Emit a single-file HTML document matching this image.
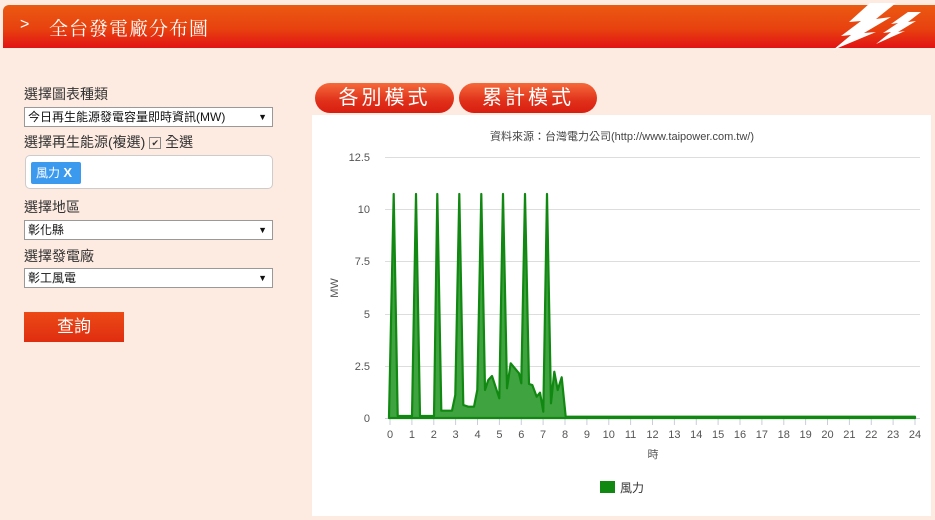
<!DOCTYPE html>
<html><head><meta charset="utf-8"><style>
body{margin:0;width:935px;height:520px;background:#fdeae1;font-family:"Liberation Sans","Noto Sans CJK TC",sans-serif;position:relative;overflow:hidden}
.hdr{position:absolute;left:3px;top:5px;width:932px;height:43px;background:linear-gradient(#ea5a12,#e8420f 55%,#e11313);border-radius:6px 0 0 0}
.hdr .t{position:absolute;left:46px;top:9px;color:#fff;font-family:"Noto Serif CJK SC",serif;font-size:19px;letter-spacing:1px}
.hdr .a{position:absolute;left:17px;top:11px;color:#fff;font-size:16px}
.lbl{position:absolute;left:24px;font-size:14px;color:#333}
.sel{position:absolute;left:24px;background:#fff;border:1px solid #999;font-size:12px;line-height:18px;padding-left:3px;box-sizing:border-box;width:249px;height:20px;color:#111}
.sel:after{content:"▼";position:absolute;right:5px;top:0;font-size:9px}
.btn{position:absolute;top:83px;height:30px;border-radius:15px;background:linear-gradient(#f56a3a,#e0301a 60%,#d91e10);color:#fff;font-size:20px;letter-spacing:3px;text-align:center;line-height:30px}
</style></head><body>
<div class="hdr"><span class="a">&gt;</span><span class="t">全台發電廠分布圖</span>
<svg style="position:absolute;left:0;top:-5px" width="932" height="50"><polygon points="867,3 893,3 873,19 888,17 861,33 873,32 830,50 848,35 838,36 858,21 846,22" fill="#fff"/><polygon points="905,12 918,12 905,22 913,21 895,32 902,31 873,44 888,32 880,33 895,23 888,24" fill="#fff"/></svg></div>
<div class="lbl" style="top:84px">選擇圖表種類</div>
<div class="sel" style="top:107px">今日再生能源發電容量即時資訊(MW)</div>
<div class="lbl" style="top:132px">選擇再生能源(複選) <span style="display:inline-block;width:10px;height:10px;border:1px solid #888;font-size:9px;line-height:10px;text-align:center;vertical-align:1px">✔</span> 全選</div>
<div style="position:absolute;left:25px;top:155px;width:248px;height:34px;background:#fff;border:1px solid #ccc;border-radius:5px;box-sizing:border-box"><div style="position:absolute;left:5px;top:6px;width:50px;height:22px;background:#3b99ee;border-radius:2px;color:#fff;font-size:12px;line-height:22px;padding-left:5px;box-sizing:border-box">風力 <b style="font-size:13px">X</b></div></div>
<div class="lbl" style="top:197px">選擇地區</div>
<div class="sel" style="top:220px">彰化縣</div>
<div class="lbl" style="top:246px">選擇發電廠</div>
<div class="sel" style="top:268px">彰工風電</div>
<div style="position:absolute;left:24px;top:312px;width:100px;height:30px;background:linear-gradient(#ec4a16,#df2d10);color:#fff;text-align:center;line-height:30px;font-size:17px">查詢</div>
<div class="btn" style="left:315px;width:139px">各別模式</div>
<div class="btn" style="left:459px;width:138px">累計模式</div>
<div style="position:absolute;left:312px;top:115px;width:619px;height:401px;background:#fff"></div>
<svg style="position:absolute;left:0;top:0" width="935" height="520" font-family="Liberation Sans,Noto Sans CJK TC,sans-serif">
<text x="622" y="140" font-size="11" fill="#444" text-anchor="middle">資料來源：台灣電力公司(http://www.taipower.com.tw/)</text>
<g stroke="#ddd" stroke-width="1"><line x1="385" x2="920" y1="157.5" y2="157.5"/><line x1="385" x2="920" y1="209.5" y2="209.5"/><line x1="385" x2="920" y1="261.5" y2="261.5"/><line x1="385" x2="920" y1="314.5" y2="314.5"/><line x1="385" x2="920" y1="366.5" y2="366.5"/></g>
<g font-size="11" fill="#555" text-anchor="end"><text x="370" y="161">12.5</text><text x="370" y="213">10</text><text x="370" y="265">7.5</text><text x="370" y="318">5</text><text x="370" y="370">2.5</text><text x="370" y="422">0</text></g>
<text x="338" y="288" font-size="11" fill="#555" transform="rotate(-90 338 288)" text-anchor="middle">MW</text>
<line x1="385" x2="920" y1="418.5" y2="418.5" stroke="#ccd"/>
<path d="M390,419v6M411.9,419v6M433.8,419v6M455.6,419v6M477.5,419v6M499.4,419v6M521.3,419v6M543.1,419v6M565,419v6M586.9,419v6M608.8,419v6M630.6,419v6M652.5,419v6M674.4,419v6M696.3,419v6M718.1,419v6M740,419v6M761.9,419v6M783.8,419v6M805.6,419v6M827.5,419v6M849.4,419v6M871.3,419v6M893.1,419v6M915,419v6" stroke="#ccd"/>
<g font-size="11" fill="#555" text-anchor="middle">
<text x="390" y="438">0</text><text x="411.9" y="438">1</text><text x="433.8" y="438">2</text><text x="455.6" y="438">3</text><text x="477.5" y="438">4</text><text x="499.4" y="438">5</text><text x="521.3" y="438">6</text><text x="543.1" y="438">7</text><text x="565" y="438">8</text><text x="586.9" y="438">9</text><text x="608.8" y="438">10</text><text x="630.6" y="438">11</text><text x="652.5" y="438">12</text><text x="674.4" y="438">13</text><text x="696.3" y="438">14</text><text x="718.1" y="438">15</text><text x="740" y="438">16</text><text x="761.9" y="438">17</text><text x="783.8" y="438">18</text><text x="805.6" y="438">19</text><text x="827.5" y="438">20</text><text x="849.4" y="438">21</text><text x="871.3" y="438">22</text><text x="893.1" y="438">23</text><text x="915" y="438">24</text>
</g>
<text x="653" y="458" font-size="11" fill="#555" text-anchor="middle">時</text>
<path d="M389,417 L393.7,194 397.7,416 412,416 416,194 420,416 434,416 437.3,194 441.3,410.7 452,410.7 455.3,395 459.3,194 463.3,405 468.3,406.7 474,406.7 477.3,390 481.3,194 485,390 488.3,380 492,376 499.3,398.3 503,194 507,388.3 510.7,363.3 519,373.3 521.3,383.3 525,194 529,384 532.3,385 536.7,396.7 540,392.7 543.3,411.7 547,194 551,403.3 554.3,371.7 557.7,390 561.7,377.3 565.7,416.7 915,416.7 L915,418 389,418Z" fill="#3fa43f" stroke="#118811" stroke-width="2.2" stroke-linejoin="round"/>
<rect x="600" y="481" width="15" height="12" fill="#118811"/>
<text x="620" y="492" font-size="12" fill="#333">風力</text>
</svg>
</body></html>
